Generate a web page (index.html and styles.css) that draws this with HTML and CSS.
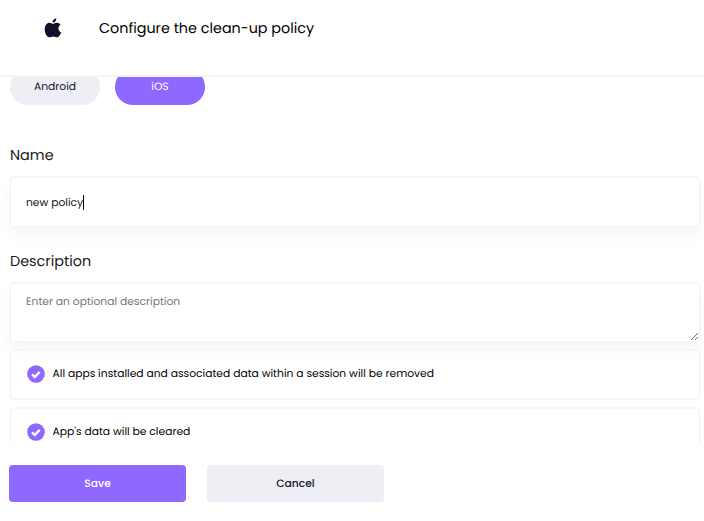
FILE: index.html
```html
<!DOCTYPE html>
<html lang="en">
<head>
<meta charset="utf-8">
<title>Configure the clean-up policy</title>
<link rel="stylesheet" href="styles.css">
</head>
<body>
<div class="dialog">
  <header class="header">
    <svg class="apple" viewBox="0 0 18 21" aria-hidden="true">
      <path d="M12.5.3c.2 2.7-1.8 4.7-4 4.6C8.3 2.6 10.2.5 12.5.3zM8.9 6.2C9.9 6.2 11.1 5 13 5c1.8 0 3.2.9 4 2.1-3.4 2-2.8 6.6.6 8-.7 1.9-2.3 4.9-4.1 5.1-1.6.1-2.2-.9-4.2-.9s-2.7.9-4.2.9C2.5 20.2.3 16 .3 11.900.3 7.7 2.7 5.1 5.2 5.1c1.7 0 2.700 1.100 3.700 1.100z"/>
    </svg>
    <h1 class="title">Configure the clean-up policy</h1>
  </header>
  <main class="content">
    <div class="tabs">
      <button class="tab">Android</button>
      <button class="tab tab-active">iOS</button>
    </div>
    <div class="label">Name</div>
    <div class="field"><span>new policy</span><i class="caret"></i></div>
    <div class="label label-description">Description</div>
    <textarea class="area" placeholder="Enter an optional description"></textarea>
    <div class="card card-first">
      <svg class="check" viewBox="0 0 18 18" aria-hidden="true"><circle cx="9" cy="9" r="8.8"/><path d="M5 9.3l2.7 2.7 5-5.1"/></svg>
      <span>All apps installed and associated data within a session will be removed</span>
    </div>
    <div class="card">
      <svg class="check" viewBox="0 0 18 18" aria-hidden="true"><circle cx="9" cy="9" r="8.8"/><path d="M5 9.3l2.7 2.7 5-5.1"/></svg>
      <span>App's data will be cleared</span>
    </div>
  </main>
  <footer class="footer">
    <button class="action action-save">Save</button>
    <button class="action">Cancel</button>
  </footer>
</div>
</body>
</html>
```
FILE: styles.css
```css
* { box-sizing: border-box; }

body {
  margin: 0;
  background: #fff;
  color: #111;
  font: 10.74px/18px Poppins, Inter, sans-serif;
  text-rendering: geometricPrecision;
}

button { border: 0; padding: 0; font: inherit; text-rendering: inherit; color: #15142b; background: #eeeff5; }

.dialog { display: flex; flex-direction: column; height: 521px; overflow: hidden; }

.header {
  display: flex;
  flex: 0 0 77px;
  align-items: flex-start;
  gap: 37px;
  padding: 18px 0 0 44px;
  border-bottom: 2px solid #f5f5f6;
}
.apple { width: 18px; height: 20px; fill: #11102a; }
.title { margin: 0; font-size: 14.35px; line-height: 23px; font-weight: 400; color: #000; white-space: nowrap; }

.content { flex: 0 0 366px; overflow: hidden; padding: 0 4px 0 10px; }

.tabs { display: flex; gap: 15px; margin-top: -8px; }
.tab { width: 90px; height: 36px; border-radius: 18px; }
.tab-active { color: #fff; background: #8f69ff; }

.label { height: 24px; margin-top: 39px; font-size: 14.4px; line-height: 24px; color: #1b1b20; }
.label-description { margin-top: 22px; }

.field, .area, .card {
  border: solid #f1f1f2;
  border-width: 2px 1px;
  border-top-color: #f6f6f7;
  border-bottom-color: #f6f6f7;
  border-radius: 4px;
}

.field {
  display: flex;
  align-items: center;
  height: 52px;
  margin-top: 8px;
  padding: 1px 15px 0;
  background: #fff;
  box-shadow: 0 8px 16px rgba(0, 0, 0, .035);
}
.caret { width: 1px; height: 15px; background: #000; }

.area {
  display: block;
  width: 100%;
  height: 61px;
  margin: 8px 0 0;
  padding: 9px 15px;
  outline: 0;
  background: #fff;
  font: inherit;
  text-rendering: inherit;
  resize: vertical;
  box-shadow: 0 8px 16px rgba(0, 0, 0, .035);
}
.area::placeholder { color: #757575; }

.card {
  display: flex;
  align-items: center;
  gap: 8px;
  height: 51px;
  margin-top: 7px;
  padding: 0 16px 1px 15.5px;
  color: #000;
  white-space: nowrap;
}
.card-first { margin-top: 6px; }
.check { width: 18px; height: 18px; flex: none; fill: #8f69ff; }
.check path { fill: none; stroke: #fff; stroke-width: 2.3; }

.footer { display: flex; gap: 21px; padding: 22px 9px 0; }
.action { width: 177px; height: 37px; padding-top: 1px; border-radius: 4px; font-weight: 500; }
.action-save { color: #fff; background: #8f69ff; }
```
